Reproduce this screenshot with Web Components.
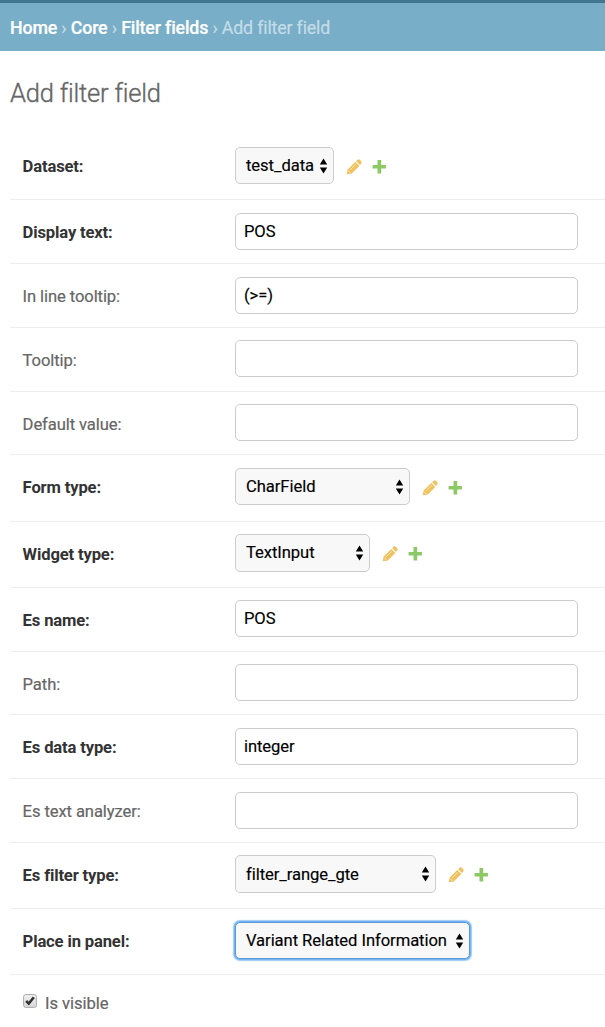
<!DOCTYPE html>
<html lang="en">
<head>
<meta charset="utf-8">
<title>Add filter field</title>
<style>
html, body { margin: 0; background: #fff; }
body { width: 605px; height: 1027px; overflow: hidden; font-family: Roboto, "Liberation Sans", sans-serif; font-size: 16.6px; color: #666; }
</style>
</head>
<body>
<admin-breadcrumbs><b>Home</b> › <b>Core</b> › <b>Filter fields</b> › Add filter field</admin-breadcrumbs>
<admin-form>
<span slot="title">Add filter field</span>
<form-row label="Dataset:" required style="--h:66px"><select-box style="--w:99px" related>test_data</select-box></form-row>
<form-row label="Display text:" required><text-box>POS</text-box></form-row>
<form-row label="In line tooltip:"><text-box>(&gt;=)</text-box></form-row>
<form-row label="Tooltip:" style="--top:12px"><text-box></text-box></form-row>
<form-row label="Default value:" style="--h:63px;--top:12px"><text-box></text-box></form-row>
<form-row label="Form type:" required style="--h:67px"><select-box style="--w:175px" related>CharField</select-box></form-row>
<form-row label="Widget type:" required style="--h:66px;--top:12px"><select-box style="--w:135px;--ch:38px;--lift:2px" related>TextInput</select-box></form-row>
<form-row label="Es name:" required style="--top:12px"><text-box>POS</text-box></form-row>
<form-row label="Path:" style="--h:63px;--top:12px"><text-box></text-box></form-row>
<form-row label="Es data type:" required><text-box>integer</text-box></form-row>
<form-row label="Es text analyzer:"><text-box></text-box></form-row>
<form-row label="Es filter type:" required style="--h:66px;--top:12px"><select-box style="--w:201px;--ch:38px" related>filter_range_gte</select-box></form-row>
<form-row label="Place in panel:" required style="--h:66px"><select-box style="--w:235px" focused>Variant Related Information</select-box></form-row>
<check-row>Is visible</check-row>
</admin-form>
<script>
const define = (name, html, setup) => customElements.define(name, class extends HTMLElement {
  connectedCallback() {
    if (this.shadowRoot) return;
    this.attachShadow({ mode: 'open' }).innerHTML = html;
    if (setup) setup(this, this.shadowRoot);
  }
});

define('admin-breadcrumbs', `<style>
:host { display: block; box-sizing: border-box; height: 51px; border-top: 3px solid #417690; background: #79aec8; color: #c4dce8; padding: 0 10px; font-size: 17.8px; line-height: 49px; letter-spacing: -.16px; white-space: nowrap; -webkit-text-stroke: .2px; }
::slotted(b) { color: #fff; font-weight: 500; }
</style><slot></slot>`);

define('admin-form', `<style>
:host { display: block; padding: 26px 0 0 10px; }
h1 { margin: 0 0 24px; height: 33px; line-height: 33px; font-size: 25.5px; font-weight: 300; letter-spacing: -.2px; color: #666; -webkit-text-stroke: .35px #666; }
</style><h1><slot name="title"></slot></h1><slot></slot>`);

define('form-row', `<style>
:host { display: flex; align-items: flex-start; box-sizing: border-box; height: var(--h, 64px); padding: var(--top, 13px) 0 0 12.6px; border-bottom: 1px solid #eee; }
label { width: 212.4px; flex: none; margin-top: calc(14px - var(--top, 13px)); line-height: 38px; color: #666; letter-spacing: -.1px; white-space: nowrap; -webkit-text-stroke: .2px; }
:host([required]) label { font-weight: 700; color: #333; letter-spacing: -.15px; -webkit-text-stroke: 0; }
</style><label></label><slot></slot>`, (host, root) => {
  root.querySelector('label').textContent = host.getAttribute('label');
});

define('text-box', `<style>
:host { display: block; box-sizing: border-box; width: 343px; height: 37px; border: 1px solid #ccc; border-radius: 5px; background: #fff; color: #000; padding-left: 8px; line-height: 35px; letter-spacing: -.08px; -webkit-text-stroke: .15px; }
</style><slot></slot>`);

define('select-box', `<style>
:host { display: flex; align-items: center; color: #000; }
.box { display: flex; align-items: center; justify-content: space-between; box-sizing: border-box; width: var(--w); height: var(--ch, 37px); border: 1px solid #ccc; border-radius: 5px; background: #f8f8f8; padding: 0 5px 0 10px; line-height: 35px; letter-spacing: -.06px; white-space: nowrap; -webkit-text-stroke: .15px; }
.box span { padding-bottom: var(--lift, 0); }
:host([focused]) .box { border-color: #5c9ad6; box-shadow: 0 0 0 1px #76b3f3, 0 0 1px 2px #9bcbfa; }
svg { display: block; flex: none; }
.links { display: none; align-items: center; margin-left: 12px; padding-top: 2px; gap: 10px; }
:host([related]) .links { display: flex; }
</style>
<div class="box"><span><slot></slot></span><svg width="9" height="16" viewBox="0 0 9 16"><path d="M4.5 .4 8.2 6.6H.8zM4.5 15.6 8.2 9.4H.8z" fill="#000"/></svg></div>
<div class="links">
<svg width="16" height="16" viewBox="0 0 16 16"><path d="M.8 15.2 1.6 10.4 9.3 2.9 13.3 6.9 5.7 14.4zM10.1 2.2 11.6.8Q12.8-.1 13.8.8L15.2 2.2Q16 3.3 15.2 4.4L14 6.1z" fill="#f0c15c"/><path d="M4.2 10.8 9.6 5.5M2.3 11.8 4.4 13.9" stroke="#fff" stroke-opacity=".8" stroke-width=".8" fill="none"/></svg>
<svg width="14" height="14" viewBox="0 0 14 14"><path d="M5.5 .1h3.7v5h4.7v3.5H9.2v4.9H5.5V8.6H.6V5.1h4.9z" fill="#8cc965"/></svg>
</div>`);

define('check-row', `<style>
:host { display: flex; align-items: flex-start; padding: 18px 0 0 13px; color: #666; line-height: 20px; letter-spacing: -.06px; -webkit-text-stroke: .2px; }
svg { display: block; margin: 1px 8px 0 0; }
span { padding-top: 1px; }
</style><svg width="14" height="15" viewBox="0 0 14 15"><defs><linearGradient id="g" x2="0" y2="1"><stop stop-color="#f2f2f2"/><stop offset="1" stop-color="#d8d8d8"/></linearGradient></defs><rect x=".6" y=".6" width="12.8" height="12.8" rx="2" fill="url(#g)" stroke="#aaa"/><path d="M3.2 7 5.8 9.6 10.8 3.3" fill="none" stroke="#333" stroke-width="2.6"/></svg><span><slot></slot></span>`);
</script>
</body>
</html>
